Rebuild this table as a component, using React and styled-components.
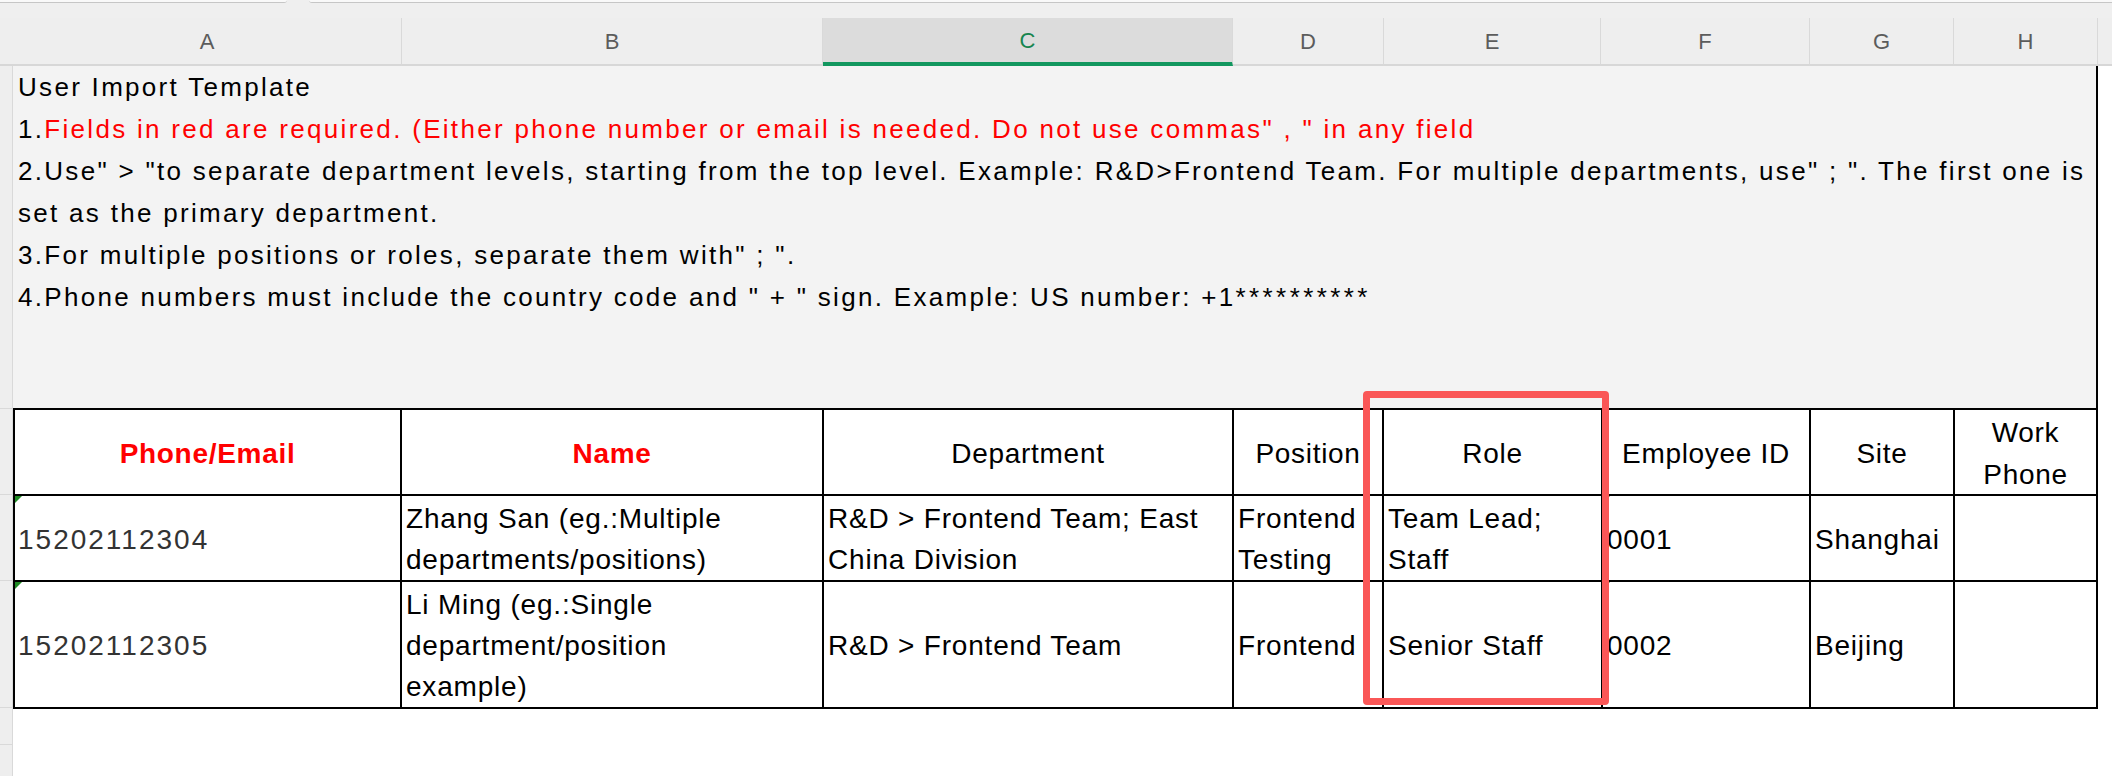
import React from 'react';
import styled, { createGlobalStyle } from 'styled-components';

const GlobalStyle = createGlobalStyle`
	body {
		margin: 0;
		background: #ffffff;
		font-family: 'Liberation Sans', Arial, sans-serif;
	}
`;

const columns = [
	{ key: 'A', width: 389 },
	{ key: 'B', width: 421 },
	{ key: 'C', width: 410, active: true },
	{ key: 'D', width: 151 },
	{ key: 'E', width: 217 },
	{ key: 'F', width: 209 },
	{ key: 'G', width: 144 },
	{ key: 'H', width: 144 },
];

const headers = [
	{ label: 'Phone/Email', required: true },
	{ label: 'Name', required: true },
	{ label: 'Department' },
	{ label: 'Position' },
	{ label: 'Role' },
	{ label: 'Employee ID' },
	{ label: 'Site' },
	{ label: 'Work\nPhone' },
];

const rows = [
	{
		height: 86,
		cells: [
			'15202112304',
			'Zhang San (eg.:Multiple\ndepartments/positions)',
			'R&D > Frontend Team; East\nChina Division',
			'Frontend\nTesting',
			'Team Lead;\nStaff',
			'0001',
			'Shanghai',
			'',
		],
	},
	{
		height: 127,
		cells: [
			'15202112305',
			'Li Ming (eg.:Single\ndepartment/position\nexample)',
			'R&D > Frontend Team',
			'Frontend',
			'Senior Staff',
			'0002',
			'Beijing',
			'',
		],
	},
];

// sheet row heights down the left gutter
const gutterRows = [343, 86, 86, 127, 37, 40];

const App = () => {
	return (
		<Page>
			<GlobalStyle />
			<TopBar>
				<TabEdge $left />
				<TabGap />
				<TabEdge />
			</TopBar>

			<ColumnBar>
				<Corner />
				{columns.map(col => (
					<ColumnLabel key={col.key} $w={col.width} $active={col.active}>
						{col.key}
					</ColumnLabel>
				))}
				<ColumnRest />
			</ColumnBar>

			<Sheet>
				<Gutter>
					{gutterRows.map((h, i) => (
						<GutterRow key={i} $h={h} />
					))}
				</Gutter>

				<Main>
					<Notes>
						<NoteLine>User Import Template</NoteLine>
						<NoteLine>
							1.
							<Red>
								Fields in red are required. (Either phone number or email is
								needed. Do not use commas" , " in any field
							</Red>
						</NoteLine>
						<NoteLine>
							2.Use" &gt; "to separate department levels, starting from the top
							level. Example: R&amp;D&gt;Frontend Team. For multiple departments,
							use" ; ". The first one is
						</NoteLine>
						<NoteLine>set as the primary department.</NoteLine>
						<NoteLine>
							3.For multiple positions or roles, separate them with" ; ".
						</NoteLine>
						<NoteLine>
							4.Phone numbers must include the country code and " + " sign.
							Example: US number: +1<Mask>**********</Mask>
						</NoteLine>
					</Notes>

					<Table>
						{headers.map(h => (
							<HeadCell key={h.label} $required={h.required}>
								{h.label}
							</HeadCell>
						))}
						{rows.map((row, r) =>
							row.cells.map((text, c) => (
								<Cell key={`${r}-${c}`} $h={row.height} $number={c === 0}>
									{(c === 0 || c === 5) && <TextFlag />}
									<CellText>{text}</CellText>
								</Cell>
							))
						)}
					</Table>
				</Main>
				<RightEdge />
			</Sheet>

			<Highlight />
		</Page>
	);
};

export default App;

const Page = styled.div`
	position: relative;
	width: 2112px;
	height: 776px;
	overflow: hidden;
	background: #ffffff;
`;

const TopBar = styled.div`
	display: flex;
	height: 18px;
	background: #efefef;
`;

const TabEdge = styled.div`
	height: 2px;
	background: #f9f9f9;
	border-bottom: 1px solid #c6c6c6;
	${props =>
		props.$left
			? 'width: 287px; border-bottom-right-radius: 8px;'
			: 'flex: 1; border-bottom-left-radius: 8px;'}
`;

const TabGap = styled.div`
	width: 22px;
`;

const ColumnBar = styled.div`
	display: flex;
	height: 48px;
	background: #eeeeee;
`;

const Corner = styled.div`
	width: 13px;
	border-bottom: 2px solid #d7d7d7;
	box-sizing: border-box;
`;

const ColumnLabel = styled.div`
	width: ${props => props.$w}px;
	box-sizing: border-box;
	display: flex;
	align-items: center;
	justify-content: center;
	padding-top: 2px;
	font-size: 22px;
	color: ${props => (props.$active ? '#17854f' : '#5c5c5c')};
	background: ${props => (props.$active ? '#dcdcdc' : '#eeeeee')};
	border-right: 1px solid #d9d9d9;
	border-bottom: ${props =>
		props.$active ? '4px solid #12975f' : '2px solid #d7d7d7'};
`;

const ColumnRest = styled.div`
	flex: 1;
	border-bottom: 2px solid #d7d7d7;
`;

const Sheet = styled.div`
	display: flex;
	align-items: flex-start;
`;

const Gutter = styled.div`
	width: 13px;
	height: 710px;
	display: flex;
	flex-direction: column;
	background: #eeeeee;
	border-right: 1px solid #d9d9d9;
	box-sizing: border-box;
`;

const GutterRow = styled.div`
	height: ${props => props.$h}px;
	flex-shrink: 0;
	box-sizing: border-box;
	border-bottom: 1px solid #d9d9d9;
`;

const Main = styled.div`
	width: 2085px;
	display: flex;
	flex-direction: column;
`;

const Notes = styled.div`
	height: 342px;
	box-sizing: border-box;
	padding: 0 0 0 5px;
	background: #f3f3f3;
	border-right: 2px solid #000000;
	font-size: 26px;
	letter-spacing: 2.3px;
	line-height: 42px;
	color: #000000;
`;

const NoteLine = styled.div`
	white-space: nowrap;
`;

const Red = styled.span`
	color: #ff0000;
`;

const Mask = styled.span`
	letter-spacing: 3.4px;
`;

const Table = styled.div`
	display: grid;
	grid-template-columns: 387px 422px 410px 150px 219px 208px 144px 143px;
	border-top: 2px solid #000000;
	border-left: 2px solid #000000;
	background: #ffffff;
`;

const HeadCell = styled.div`
	height: 86px;
	box-sizing: border-box;
	display: flex;
	align-items: center;
	justify-content: center;
	text-align: center;
	padding-top: 4px;
	border-right: 2px solid #000000;
	border-bottom: 2px solid #000000;
	font-size: 28px;
	line-height: 42px;
	letter-spacing: 0.7px;
	white-space: pre-line;
	font-weight: ${props => (props.$required ? 700 : 400)};
	color: ${props => (props.$required ? '#ff0000' : '#000000')};
`;

const Cell = styled.div`
	position: relative;
	height: ${props => props.$h}px;
	box-sizing: border-box;
	display: flex;
	align-items: center;
	padding: 2px 4px 0 ${props => (props.$number ? '3px' : '4px')};
	border-right: 2px solid #000000;
	border-bottom: 2px solid #000000;
	font-size: 28px;
	line-height: 41px;
	letter-spacing: ${props => (props.$number ? '2px' : '0.8px')};
	color: ${props => (props.$number ? '#333333' : '#000000')};
	overflow: hidden;
`;

const CellText = styled.div`
	white-space: pre-line;
`;

const TextFlag = styled.span`
	position: absolute;
	top: 0;
	left: 0;
	width: 0;
	height: 0;
	border-top: 7px solid #1f8a24;
	border-right: 7px solid transparent;
`;

const RightEdge = styled.div`
	flex: 1;
`;

const Highlight = styled.div`
	position: absolute;
	left: 1363px;
	top: 391px;
	width: 246px;
	height: 314px;
	box-sizing: border-box;
	border: 7px solid #fa5757;
	border-radius: 4px;
`;
